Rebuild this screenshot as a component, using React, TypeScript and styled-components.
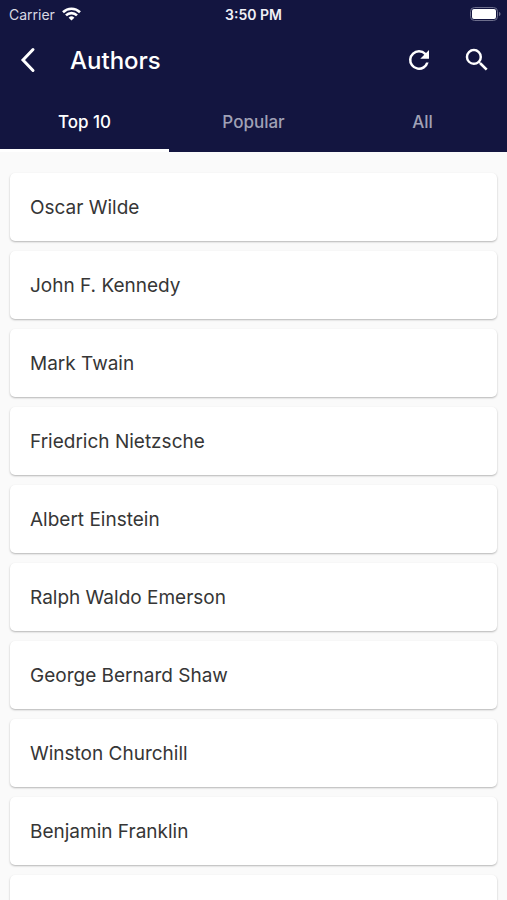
import React from "react";
import styled, { createGlobalStyle } from "styled-components";

const GlobalStyle = createGlobalStyle`
  *, *::before, *::after { box-sizing: border-box; }
  html, body { margin: 0; height: 100%; overflow: hidden; }
  #root { height: 100%; }
  body { background: #fafafa; font-family: Inter, "Liberation Sans", sans-serif; }
  button { font: inherit; color: inherit; border: 0; padding: 0; background: none; cursor: pointer; }
`;

const Screen = styled.div`
  display: flex;
  flex-direction: column;
  height: 100%;
`;

const Header = styled.header`
  flex: none;
  background: #131540;
  color: #ffffff;
`;

const StatusBar = styled.div`
  display: grid;
  grid-template-columns: 1fr auto 1fr;
  align-items: center;
  height: 28px;
  padding: 0 6px;
  font-size: 14px;
`;

const Carrier = styled.span`
  display: flex;
  align-items: center;
  gap: 7px;
  padding-left: 3px;
  color: #d9d9e3;
`;

const Clock = styled.time`
  color: #f0f0f6;
  font-weight: 600;
`;

const Battery = styled.svg`
  justify-self: end;
`;

const TitleBar = styled.div`
  display: flex;
  align-items: center;
  height: 64px;
  padding: 0 14px 0 12px;
`;

const IconButton = styled.button`
  display: grid;
  place-items: center;
  width: 32px;
  height: 40px;
`;

const Title = styled.h1`
  flex: 1;
  margin: 0;
  padding-left: 26px;
  font-size: 24px;
  font-weight: 500;
`;

const Actions = styled.div`
  display: flex;
  gap: 26px;
`;

const Tabs = styled.div`
  display: grid;
  grid-template-columns: repeat(3, 1fr);
  height: 60px;
`;

const Tab = styled.button<{ $active: boolean }>`
  && {
    padding-top: 2px;
    color: ${(p) => (p.$active ? "#ffffff" : "#a0a1b6")};
    font-size: 17px;
    font-weight: 500;
    border-bottom: 3px solid ${(p) => (p.$active ? "#ffffff" : "transparent")};
  }
`;

const AuthorList = styled.ul`
  display: flex;
  flex: 1;
  flex-direction: column;
  gap: 10px;
  min-height: 0;
  margin: 0;
  padding: 21px 10px;
  overflow: hidden;
  list-style: none;
`;

const AuthorItem = styled.li`
  flex: none;
`;

const AuthorCard = styled.button`
  && {
    display: block;
    width: 100%;
    height: 68px;
    padding: 0 20px;
    border-radius: 5px;
    background: #ffffff;
    box-shadow: 0 1px 2px rgba(0, 0, 0, 0.28);
    color: #363636;
    font-size: 19px;
    text-align: left;
  }
`;

const tabs = ["Top 10", "Popular", "All"];

const authors = [
  "Oscar Wilde",
  "John F. Kennedy",
  "Mark Twain",
  "Friedrich Nietzsche",
  "Albert Einstein",
  "Ralph Waldo Emerson",
  "George Bernard Shaw",
  "Winston Churchill",
  "Benjamin Franklin",
  "",
];

export default function App() {
  const [active, setActive] = React.useState(0);
  return (
    <Screen>
      <GlobalStyle />
      <Header>
        <StatusBar>
          <Carrier>
            Carrier
            <svg width="19" height="14" viewBox="0 0 19 14" fill="none" stroke="#ffffff" strokeWidth="2.6" aria-label="Wi-Fi">
              <path d="M1 5.2a12.2 12.2 0 0 1 17 0M4 8.4a7.8 7.8 0 0 1 11 0" />
              <path d="M9.5 13.6 6.6 10.8a4.1 4.1 0 0 1 5.8 0Z" fill="#ffffff" stroke="none" />
            </svg>
          </Carrier>
          <Clock>3:50 PM</Clock>
          <Battery width="31" height="14" viewBox="0 0 31 14" aria-label="Battery full">
            <rect x="0.5" y="0.5" width="27" height="13" rx="4" fill="none" stroke="#6d6e8c" />
            <rect x="2" y="2" width="24" height="10" rx="2" fill="#ffffff" />
            <path d="M29 5v4c2-.6 2-3.4 0-4Z" fill="#6d6e8c" />
          </Battery>
        </StatusBar>
        <TitleBar>
          <IconButton aria-label="Back">
            <svg width="32" height="28" viewBox="0 0 32 28" fill="none" stroke="currentColor" strokeWidth="3" strokeLinecap="round">
              <path d="M21 3.500 11 14l10 10.500" />
            </svg>
          </IconButton>
          <Title>Authors</Title>
          <Actions>
            <IconButton aria-label="Refresh">
              <svg width="30" height="30" viewBox="0 0 24 24" fill="currentColor">
                <path d="M17.650 6.350A7.958 7.958 0 0 0 12 4a8 8 0 1 0 7.730 10h-2.080A6 6 0 1 1 12 6c1.660 0 3.140.69 4.220 1.780L13 11h7V4l-2.350 2.350z" />
              </svg>
            </IconButton>
            <IconButton aria-label="Search">
              <svg width="30" height="30" viewBox="0 0 24 24" fill="currentColor">
                <path d="M15.500 14h-.79l-.28-.27A6.471 6.471 0 0 0 16 9.500 6.500 6.500 0 1 0 9.500 16c1.610 0 3.090-.59 4.230-1.570l.27.28v.79l5 4.990L20.490 19l-4.990-5zm-6 0C7.010 14 5 11.990 5 9.500S7.010 5 9.500 5 14 7.010 14 9.500 11.990 14 9.500 14z" />
              </svg>
            </IconButton>
          </Actions>
        </TitleBar>
        <Tabs role="tablist">
          {tabs.map((label, i) => (
            <Tab key={label} role="tab" aria-selected={i === active} $active={i === active} onClick={() => setActive(i)}>
              {label}
            </Tab>
          ))}
        </Tabs>
      </Header>
      <AuthorList>
        {authors.map((name, i) => (
          <AuthorItem key={i}>
            <AuthorCard>{name}</AuthorCard>
          </AuthorItem>
        ))}
      </AuthorList>
    </Screen>
  );
}
